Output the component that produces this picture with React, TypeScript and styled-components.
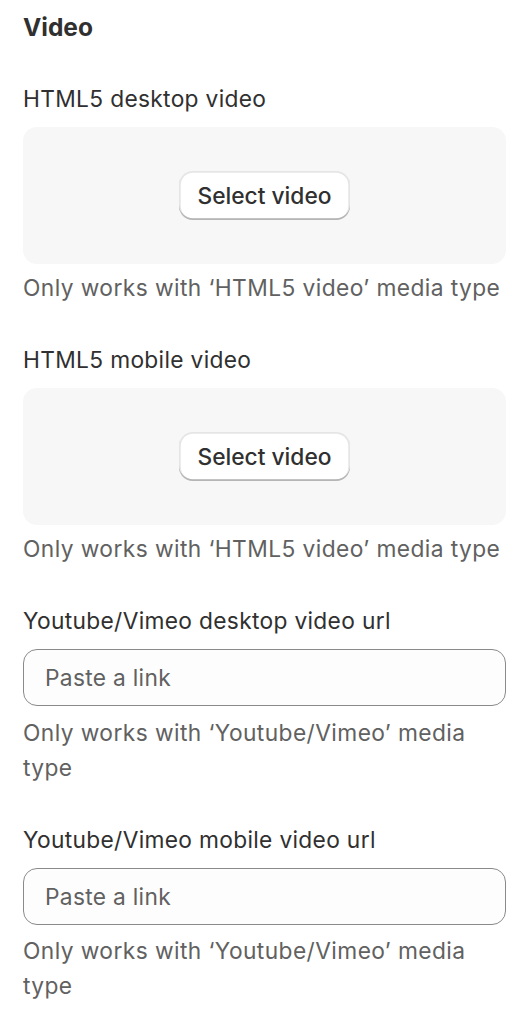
import React from "react";
import styled, { createGlobalStyle } from "styled-components";

const GlobalStyle = createGlobalStyle`
  html, body {
    margin: 0;
    padding: 0;
    background: #ffffff;
  }
  body {
    font-family: Inter, "Noto Sans", "Liberation Sans", sans-serif;
    color: #303030;
    -webkit-font-smoothing: antialiased;
  }
  * { box-sizing: border-box; }
`;

const Panel = styled.div`
  display: flex;
  flex-direction: column;
  gap: 37px;
  padding: 10px 24px 0 23px;
`;

const Heading = styled.h2`
  margin: 0 0 -1px 0;
  font-size: 24.5px;
  line-height: 35px;
  font-weight: 650;
  color: #303030;
`;

const Field = styled.div`
  display: flex;
  flex-direction: column;
`;

const Label = styled.label<{ $gap: number }>`
  display: block;
  font-size: 22.75px;
  line-height: 35px;
  font-weight: 400;
  letter-spacing: 0.32px;
  color: #303030;
  margin-bottom: ${(p) => p.$gap}px;
`;

const Help = styled.p<{ $gap: number }>`
  margin: ${(p) => p.$gap}px 0 0 0;
  font-size: 22.75px;
  line-height: 35px;
  font-weight: 400;
  letter-spacing: 0.42px;
  color: #616161;
`;

const DropZone = styled.div`
  height: 137px;
  border-radius: 14px;
  background: #f7f7f7;
  display: flex;
  align-items: center;
  justify-content: center;
`;

const SecondaryButton = styled.button`
  height: 49px;
  padding: 0 18.5px;
  border: none;
  border-radius: 14px;
  background: #ffffff;
  font-family: inherit;
  font-size: 22.75px;
  font-weight: 550;
  color: #303030;
  box-shadow: inset 0 -1.75px 0 0 #b5b5b5, inset 0 0 0 1.75px rgba(0, 0, 0, 0.1);
  cursor: pointer;
`;

const TextInput = styled.input`
  height: 57px;
  width: 100%;
  padding: 0 21px;
  border: 1px solid #8a8a8a;
  border-radius: 14px;
  background: #fdfdfd;
  font-family: inherit;
  font-size: 22.75px;
  letter-spacing: 0.3px;
  color: #303030;
  outline: none;
  &::placeholder {
    color: #616161;
  }
`;

type MediaFieldProps = { label: string; help: string };

const VideoPicker = ({ label, help }: MediaFieldProps) => (
  <Field>
    <Label $gap={11}>{label}</Label>
    <DropZone>
      <SecondaryButton type="button">Select video</SecondaryButton>
    </DropZone>
    <Help $gap={6}>{help}</Help>
  </Field>
);

const UrlField = ({ label, help }: MediaFieldProps) => (
  <Field>
    <Label $gap={11}>{label}</Label>
    <TextInput type="text" placeholder="Paste a link" />
    <Help $gap={8.5}>{help}</Help>
  </Field>
);

export default function App() {
  return (
    <>
      <GlobalStyle />
      <Panel>
        <Heading>Video</Heading>
        <VideoPicker
          label="HTML5 desktop video"
          help="Only works with ‘HTML5 video’ media type"
        />
        <VideoPicker
          label="HTML5 mobile video"
          help="Only works with ‘HTML5 video’ media type"
        />
        <UrlField
          label="Youtube/Vimeo desktop video url"
          help="Only works with ‘Youtube/Vimeo’ media type"
        />
        <UrlField
          label="Youtube/Vimeo mobile video url"
          help="Only works with ‘Youtube/Vimeo’ media type"
        />
      </Panel>
    </>
  );
}
